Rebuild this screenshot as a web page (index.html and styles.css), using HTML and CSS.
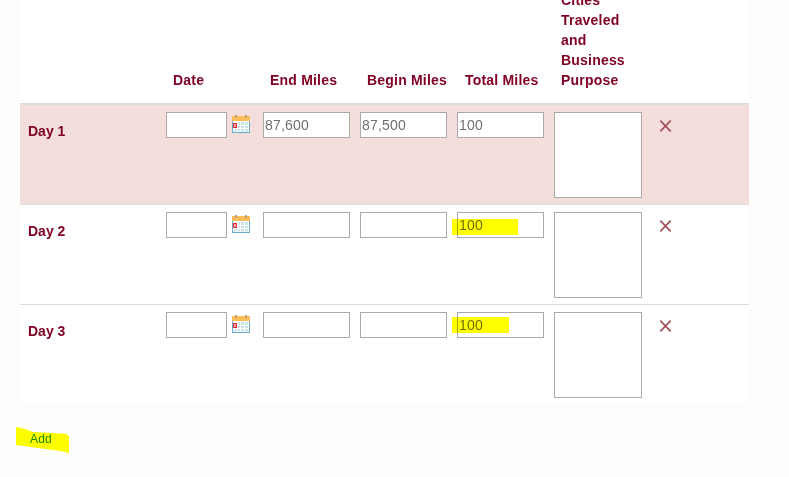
FILE: index.html
```html
<!DOCTYPE html>
<html lang="en">
<head>
    <meta charset="UTF-8">
    <title>Mileage log</title>
    <link rel="stylesheet" href="styles.css">
</head>
<body>
    <svg width="0" height="0" class="defs">
        <symbol id="cal" viewBox="0 0 18 18">
            <rect x="0.5" y="3.5" width="17" height="14" fill="#fff" stroke="#6aa9c9"/>
            <rect x="0" y="1" width="18" height="5" fill="#fbbd5a"/>
            <rect x="3" y="0" width="2" height="3" fill="#b9a27a"/>
            <rect x="13" y="0" width="2" height="3" fill="#b9a27a"/>
            <path d="M6 7h2v3h-2zM9 7h3v3h-3zM13 7h3v3h-3zM6 11h2v2h-2zM9 11h3v2h-3zM13 11h3v2h-3zM2 14h3v2.500h-3zM6 14h2v2.500h-2zM9 14h3v2.500h-3zM13 14h3v2.500h-3z" fill="#c8e4e6"/>
            <rect x="1.500" y="8.500" width="3" height="4" fill="#f9a9a9" stroke="#ee2b3b"/>
        </symbol>
        <symbol id="del" viewBox="0 0 13 12">
            <path d="M1.300 0.700L11.700 11.300M11.700 0.700L1.300 11.300" stroke="#a54f5b" stroke-width="1.700" fill="none"/>
        </symbol>
    </svg>

    <table class="log">
        <thead>
            <tr>
                <th></th>
                <th>Date</th>
                <th>End Miles</th>
                <th>Begin Miles</th>
                <th>Total Miles</th>
                <th class="purpose">Cities Traveled and Business Purpose</th>
                <th></th>
            </tr>
        </thead>
        <tbody>
            <tr class="current">
                <td class="day">Day 1</td>
                <td class="date"><input type="text"><svg class="cal"><use href="#cal"/></svg></td>
                <td><input type="text" value="87,600"></td>
                <td><input type="text" value="87,500"></td>
                <td><input type="text" value="100"></td>
                <td><textarea></textarea></td>
                <td class="remove"><svg class="del"><use href="#del"/></svg></td>
            </tr>
            <tr>
                <td class="day">Day 2</td>
                <td class="date"><input type="text"><svg class="cal"><use href="#cal"/></svg></td>
                <td><input type="text"></td>
                <td><input type="text"></td>
                <td class="marked"><input type="text" value="100"><span class="marker wide"></span></td>
                <td><textarea></textarea></td>
                <td class="remove"><svg class="del"><use href="#del"/></svg></td>
            </tr>
            <tr>
                <td class="day">Day 3</td>
                <td class="date"><input type="text"><svg class="cal"><use href="#cal"/></svg></td>
                <td><input type="text"></td>
                <td><input type="text"></td>
                <td class="marked"><input type="text" value="100"><span class="marker narrow"></span></td>
                <td><textarea></textarea></td>
                <td class="remove"><svg class="del"><use href="#del"/></svg></td>
            </tr>
        </tbody>
    </table>

    <div class="actions">
        <a class="add" href="#">Add</a>
        <span class="scribble"></span>
    </div>
</body>
</html>
```

FILE: styles.css
```css
* {
    box-sizing: border-box;
}

html, body {
    height: 477px;
    overflow: hidden;
}

body {
    margin: 0;
    background-color: #fdfdfd;
    font-family: "Liberation Sans", Arial, sans-serif;
    font-size: 14px;
}

.defs {
    display: block;
    height: 0;
}

/* Table */
.log {
    width: 729px;
    margin: -20px 0 0 20px;
    border-collapse: collapse;
    table-layout: fixed;
    background-color: #fff;
}

.log th:nth-child(1) { width: 138px; }
.log th:nth-child(2),
.log th:nth-child(3),
.log th:nth-child(4),
.log th:nth-child(5) { width: 97px; }
.log th:nth-child(6) { width: 104px; }

.log th {
    padding: 10px 0 13px 15px;
    border-bottom: 2px solid #ddd;
    color: #7f0022;
    font-size: 14px;
    font-weight: bold;
    line-height: 20px;
    letter-spacing: 0.2px;
    text-align: left;
    vertical-align: bottom;
    white-space: nowrap;
}

.log th.purpose {
    padding-right: 8px;
    white-space: normal;
}

.log th:nth-child(5) {
    padding-left: 16px;
}

.log td {
    height: 100px;
    padding: 7px 8px 0;
    border-bottom: 1px solid #ddd;
    vertical-align: top;
}

.log tbody tr:last-child td {
    border-bottom: 0;
}

.current td {
    background-color: #f3dedc;
}

.log td.day {
    padding-top: 18px;
    color: #7f0022;
    font-weight: bold;
    line-height: 16px;
}

/* Fields */
input,
textarea {
    display: block;
    margin: 0;
    border: 1px solid #aaa;
    border-radius: 0;
    background-color: #fff;
    color: #6f6f6f;
    font-family: "Liberation Sans", Arial, sans-serif;
    font-size: 14px;
}

input {
    width: 87px;
    height: 26px;
    padding: 0 2px 0 1px;
    letter-spacing: 0.2px;
}

textarea {
    width: 88px;
    height: 86px;
    resize: none;
}

.date {
    white-space: nowrap;
}

.date input {
    display: inline-block;
    width: 61px;
    vertical-align: top;
}

.cal {
    display: inline-block;
    width: 18px;
    height: 18px;
    margin: 3px 0 0 5px;
    vertical-align: top;
}

.log td.remove {
    padding-left: 9px;
}

.del {
    display: block;
    width: 13px;
    height: 12px;
    margin-top: 8px;
}

/* Highlighter marks drawn over the screenshot */
.marked {
    position: relative;
}

.marker {
    position: absolute;
    left: 3px;
    height: 16px;
    background-color: #ffff00;
    mix-blend-mode: multiply;
}

.marker.wide {
    top: 14px;
    width: 66px;
}

.marker.narrow {
    top: 12px;
    width: 57px;
}

.actions {
    position: relative;
    padding: 26px 0 0 30px;
}

.add {
    color: #1c8a1c;
    font-size: 12px;
    line-height: 14px;
    letter-spacing: 0.2px;
    text-decoration: none;
}

.scribble {
    position: absolute;
    left: 16px;
    top: 23px;
    width: 53px;
    height: 26px;
    background-color: #ffff00;
    mix-blend-mode: multiply;
    clip-path: polygon(0 0, 6px 1px, 17px 5px, 37px 6px, 50px 7px, 53px 9px, 53px 26px, 44px 24px, 22px 21px, 0 18px);
}
```
